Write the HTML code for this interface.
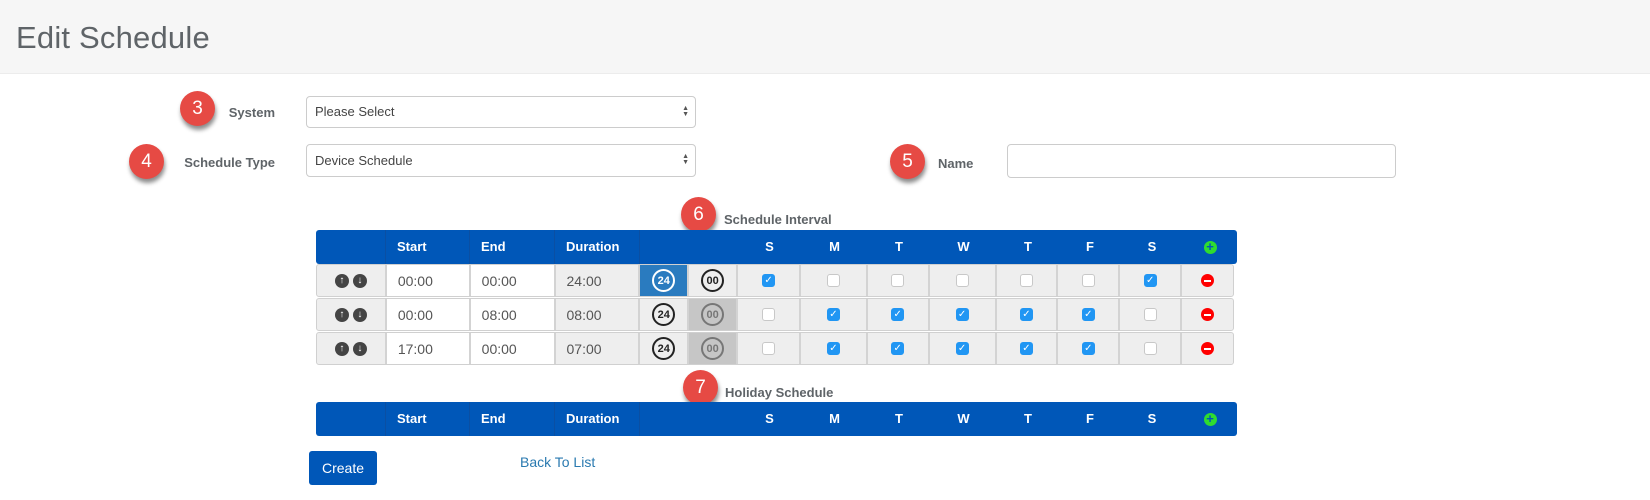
<!DOCTYPE html>
<html><head><meta charset="utf-8"><style>
*{box-sizing:border-box;margin:0;padding:0}
body{width:1650px;height:500px;background:#fff;font-family:"Liberation Sans",sans-serif;position:relative;overflow:hidden;color:#555}
.hdr{position:absolute;left:0;top:0;width:1650px;height:74px;background:#f6f6f6;border-bottom:1px solid #ececec}
.hdr h1{position:absolute;left:16px;top:20px;font-size:31px;font-weight:normal;color:#5f6468;letter-spacing:0.2px}
.a{position:absolute}
.badge{position:absolute;width:35px;height:35px;border-radius:50%;background:#e64a44;color:#fff;font-size:19px;text-align:center;line-height:35px;box-shadow:1px 4px 4px rgba(0,0,0,.45)}
.lbl{position:absolute;font-weight:bold;font-size:13px;color:#5f6468}
.sel{position:absolute;border:1px solid #ccc;border-radius:4px;background:#fff;font-size:13px;color:#444;padding-left:8px;line-height:30px}
.sel .ar{position:absolute;right:6px;top:9px;font-size:7px;line-height:6px;color:#555}
.row{position:absolute;left:316px;width:921px;display:flex}
.th{background:#0057b8;height:34px;border-radius:3px;color:#fff;font-weight:bold;font-size:13px}
.th div{height:34px;line-height:34px;border-right:1px solid #0a4fa3}
.tr{height:33px;background:#eee;border:1px solid #d0d0d0;border-radius:3px;font-size:14px;color:#555;width:918px}
.tr div{height:31px;border-right:2px solid #d3d3d3;display:flex;align-items:center;justify-content:center}
.c{text-align:center}
.cb{width:13px;height:13px;border-radius:3px;border:1px solid #c8c8c8;background:#fff}
.cb.on{background:#2196f3;border-color:#2196f3;color:#fff;font-size:10px;line-height:11px;text-align:center}
.circ{width:23px;height:23px;border-radius:50%;border:2px solid #222;font-size:11px;font-weight:bold;display:flex;align-items:center;justify-content:center;color:#222}
.ic{width:14px;height:14px;border-radius:50%;background:#444;color:#fff;font-size:10px;font-weight:bold;display:flex;align-items:center;justify-content:center}
</style></head><body>
<div class="hdr"><h1>Edit Schedule</h1></div>

<div class="badge" style="left:180px;top:91px">3</div>
<div class="lbl" style="left:214px;top:105px;width:61px;text-align:right">System</div>
<div class="sel" style="left:306px;top:96px;width:390px;height:32px">Please Select<span class="ar">▲<br>▼</span></div>

<div class="badge" style="left:129px;top:144px">4</div>
<div class="lbl" style="left:160px;top:155px;width:115px;text-align:right">Schedule Type</div>
<div class="sel" style="left:306px;top:144px;width:390px;height:33px;line-height:31px">Device Schedule<span class="ar">▲<br>▼</span></div>

<div class="badge" style="left:890px;top:144px">5</div>
<div class="lbl" style="left:938px;top:156px">Name</div>
<div class="sel" style="left:1007px;top:144px;width:389px;height:34px"></div>

<div class="badge" style="left:681px;top:197px">6</div>
<div class="lbl" style="left:724px;top:212px">Schedule Interval</div>

<div class="row th" style="top:230px">
<div style="width:70px"></div><div style="width:84px;padding-left:11px">Start</div><div style="width:85px;padding-left:11px">End</div><div style="width:85px;padding-left:11px">Duration</div><div style="width:49px;border:0"></div><div style="width:49px;border:0"></div>
<div class="c" style="width:63px;border:0">S</div><div class="c" style="width:67px;border:0">M</div><div class="c" style="width:62px;border:0">T</div><div class="c" style="width:67px;border:0">W</div><div class="c" style="width:62px;border:0">T</div><div class="c" style="width:62px;border:0">F</div><div class="c" style="width:62px;border:0">S</div>
<div style="width:54px;border:0;display:flex;align-items:center;justify-content:center"><span style="width:13px;height:13px;border-radius:50%;background:#2fdc2f;color:#0057b8;font-size:13px;line-height:12px;text-align:center;font-weight:bold">+</span></div>
</div>

<div class="row tr" style="top:264px">
<div style="width:70px;gap:4px"><span class="ic">↑</span><span class="ic">↓</span></div>
<div style="width:84px;background:#fff;justify-content:flex-start;padding-left:11px">00:00</div>
<div style="width:85px;background:#fff;justify-content:flex-start;padding-left:11px">00:00</div>
<div style="width:85px;justify-content:flex-start;padding-left:11px">24:00</div>
<div style="width:49px;background:#2a7bbf"><span class="circ" style="border-color:#fff;color:#fff">24</span></div>
<div style="width:49px"><span class="circ">00</span></div>
<div style="width:63px"><span class="cb on">✓</span></div><div style="width:67px"><span class="cb"></span></div><div style="width:62px"><span class="cb"></span></div><div style="width:67px"><span class="cb"></span></div><div style="width:62px"><span class="cb"></span></div><div style="width:62px"><span class="cb"></span></div><div style="width:62px"><span class="cb on">✓</span></div>
<div style="width:51px;border:0"><span style="width:13px;height:13px;border-radius:50%;background:#f00;display:flex;align-items:center;justify-content:center"><i style="width:7px;height:2px;background:#fff"></i></span></div>
</div>

<div class="row tr" style="top:298px">
<div style="width:70px;gap:4px"><span class="ic">↑</span><span class="ic">↓</span></div>
<div style="width:84px;background:#fff;justify-content:flex-start;padding-left:11px">00:00</div>
<div style="width:85px;background:#fff;justify-content:flex-start;padding-left:11px">08:00</div>
<div style="width:85px;justify-content:flex-start;padding-left:11px">08:00</div>
<div style="width:49px"><span class="circ">24</span></div>
<div style="width:49px;background:#c6c6c6"><span class="circ" style="border-color:#777;color:#777">00</span></div>
<div style="width:63px"><span class="cb"></span></div><div style="width:67px"><span class="cb on">✓</span></div><div style="width:62px"><span class="cb on">✓</span></div><div style="width:67px"><span class="cb on">✓</span></div><div style="width:62px"><span class="cb on">✓</span></div><div style="width:62px"><span class="cb on">✓</span></div><div style="width:62px"><span class="cb"></span></div>
<div style="width:51px;border:0"><span style="width:13px;height:13px;border-radius:50%;background:#f00;display:flex;align-items:center;justify-content:center"><i style="width:7px;height:2px;background:#fff"></i></span></div>
</div>

<div class="row tr" style="top:332px">
<div style="width:70px;gap:4px"><span class="ic">↑</span><span class="ic">↓</span></div>
<div style="width:84px;background:#fff;justify-content:flex-start;padding-left:11px">17:00</div>
<div style="width:85px;background:#fff;justify-content:flex-start;padding-left:11px">00:00</div>
<div style="width:85px;justify-content:flex-start;padding-left:11px">07:00</div>
<div style="width:49px"><span class="circ">24</span></div>
<div style="width:49px;background:#c6c6c6"><span class="circ" style="border-color:#777;color:#777">00</span></div>
<div style="width:63px"><span class="cb"></span></div><div style="width:67px"><span class="cb on">✓</span></div><div style="width:62px"><span class="cb on">✓</span></div><div style="width:67px"><span class="cb on">✓</span></div><div style="width:62px"><span class="cb on">✓</span></div><div style="width:62px"><span class="cb on">✓</span></div><div style="width:62px"><span class="cb"></span></div>
<div style="width:51px;border:0"><span style="width:13px;height:13px;border-radius:50%;background:#f00;display:flex;align-items:center;justify-content:center"><i style="width:7px;height:2px;background:#fff"></i></span></div>
</div>

<div class="badge" style="left:683px;top:370px">7</div>
<div class="lbl" style="left:725px;top:385px">Holiday Schedule</div>

<div class="row th" style="top:402px">
<div style="width:70px"></div><div style="width:84px;padding-left:11px">Start</div><div style="width:85px;padding-left:11px">End</div><div style="width:85px;padding-left:11px">Duration</div><div style="width:49px;border:0"></div><div style="width:49px;border:0"></div>
<div class="c" style="width:63px;border:0">S</div><div class="c" style="width:67px;border:0">M</div><div class="c" style="width:62px;border:0">T</div><div class="c" style="width:67px;border:0">W</div><div class="c" style="width:62px;border:0">T</div><div class="c" style="width:62px;border:0">F</div><div class="c" style="width:62px;border:0">S</div>
<div style="width:54px;border:0;display:flex;align-items:center;justify-content:center"><span style="width:13px;height:13px;border-radius:50%;background:#2fdc2f;color:#0057b8;font-size:13px;line-height:12px;text-align:center;font-weight:bold">+</span></div>
</div>

<div class="a" style="left:309px;top:451px;width:68px;height:34px;background:#0057b8;border-radius:3px;color:#fff;font-size:14px;line-height:34px;text-align:center">Create</div>
<div class="a" style="left:520px;top:454px;font-size:14px;color:#2a7ab0">Back To List</div>
</body></html>
